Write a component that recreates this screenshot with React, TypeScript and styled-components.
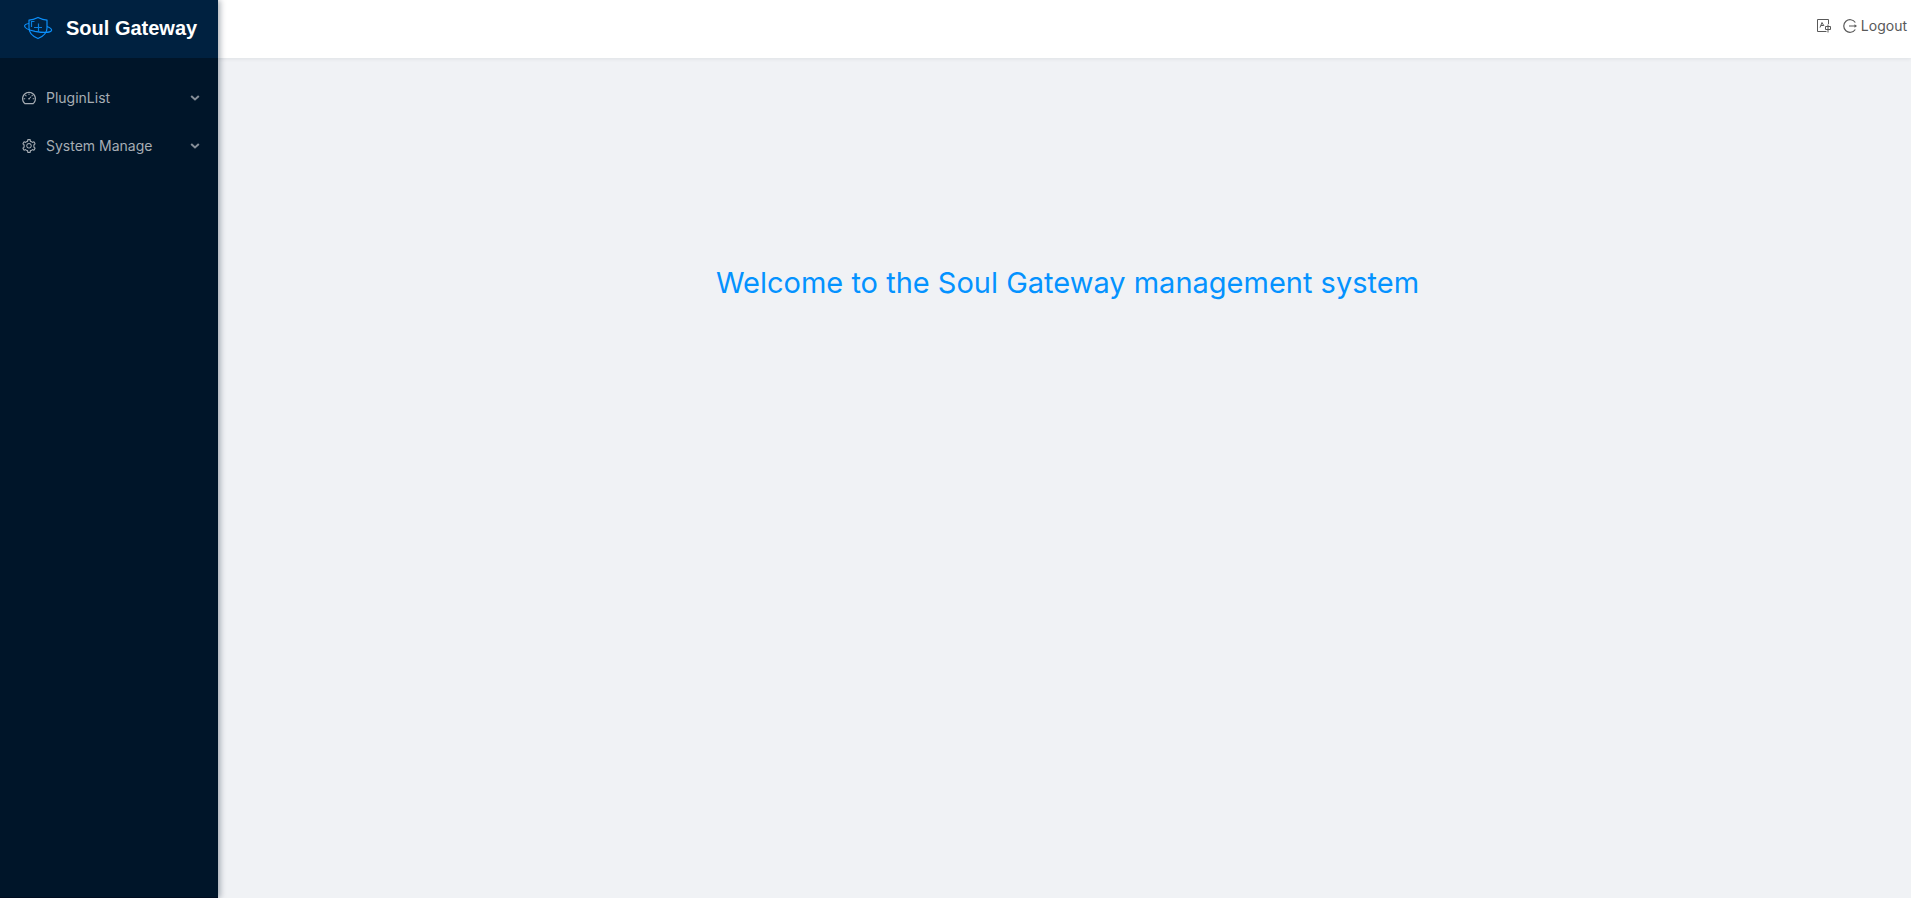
import React from "react";
import styled, { createGlobalStyle } from "styled-components";
import { AiOutlineDashboard, AiOutlineSetting } from "react-icons/ai";

const GlobalStyle = createGlobalStyle`
  *, *::before, *::after { box-sizing: border-box; }
  body {
    margin: 0;
    font-family: Inter, "Liberation Sans", sans-serif;
    font-size: 14px;
    line-height: 20px;
    background: #f0f2f5;
  }
`;

const Layout = styled.div`
  display: flex;
  min-height: 100vh;
`;

const Sider = styled.aside`
  flex: 0 0 218px;
  position: relative;
  z-index: 1;
  background: #001529;
  border-bottom: 1px solid #000d20;
  box-shadow: 2px 0 6px rgba(0, 21, 41, 0.35);
`;

const Brand = styled.a`
  display: flex;
  align-items: center;
  gap: 12px;
  height: 58px;
  padding: 0 0 2px 24px;
  background: #002140;
  text-decoration: none;
`;

const BrandTitle = styled.h1`
  margin: 0;
  color: #fff;
  font-family: "Liberation Sans", sans-serif;
  font-size: 20px;
  font-weight: 700;
  line-height: 24px;
`;

const Menu = styled.nav`
  display: flex;
  flex-direction: column;
  gap: 8px;
  padding-top: 20px;
`;

const MenuItem = styled.button`
  display: flex;
  align-items: center;
  gap: 9px;
  height: 40px;
  padding: 0 18px 0 21px;
  border: 0;
  background: transparent;
  color: #a6adb4;
  font: inherit;
  text-align: left;
  cursor: pointer;
`;

const MenuLabel = styled.span`
  flex: 1;
`;

const Main = styled.div`
  flex: 1;
  min-width: 0;
  display: flex;
  flex-direction: column;
`;

const Header = styled.header`
  display: flex;
  justify-content: flex-end;
  align-items: center;
  gap: 12px;
  height: 58px;
  padding: 0 4px 6px 12px;
  background: #fff;
  box-shadow: 0 1px 4px rgba(0, 21, 41, 0.08);
`;

const HeaderButton = styled.button`
  display: flex;
  align-items: center;
  gap: 4px;
  padding: 0;
  border: 0;
  background: transparent;
  color: #595959;
  font: inherit;
  cursor: pointer;
`;

const Content = styled.main`
  flex: 1;
  padding: 201px 24px 24px 30px;
`;

const Welcome = styled.p`
  margin: 0;
  color: #0492ff;
  font-size: 29px;
  line-height: 48px;
  text-align: center;
`;

const Logo = () => (
  <svg width="30" height="24" viewBox="0 0 30 24" fill="none" stroke="#0b8ffa" strokeWidth="1.200" aria-hidden="true">
    <path d="M14 1.500C11 3 8 4 5 4.200V12c0 5 4 8.500 9 10.500 5-2 9-5.500 9-10.500V4.200C20 4 17 3 14 1.500Z" />
    <path d="M5 7.500C1.500 8 .5 9 .6 10.200.8 12 5 14 11 15.300c7 1.300 15.500 1.700 16.500-.8.5-1.500-1.500-2.800-4.500-4" />
    <path d="M7.500 11V5.500h3M10 11.500h8M14.500 7.500v8" strokeOpacity=".85" />
  </svg>
);

const Chevron = () => (
  <svg width="10" height="8" viewBox="0 0 10 8" fill="none" stroke="currentColor" strokeOpacity=".8" strokeWidth="2" aria-hidden="true">
    <path d="M1.200 2 5 5.500l3.800-3.500" />
  </svg>
);

const LanguageIcon = () => (
  <svg width="14" height="14" viewBox="0 0 14 14" fill="none" stroke="currentColor" aria-hidden="true">
    <path d="M11.500 5V.5H.5v12h9" />
    <path d="M3 8.500 5 3.500l2 3.500M4 6.500h2.500M8.500 7.500h5v3h-5zM11 5.500v8" />
  </svg>
);

const LogoutIcon = () => (
  <svg width="14" height="14" viewBox="0 0 14 14" fill="none" stroke="currentColor" strokeWidth="1.200" aria-hidden="true">
    <path d="M12.300 3.500a6.300 6.300 0 1 0 0 7M6 7h6.500" />
    <path d="M11.500 5.300 14 7l-2.500 1.700Z" fill="currentColor" stroke="none" />
  </svg>
);

const menuItems = [
  { label: "PluginList", Icon: AiOutlineDashboard },
  { label: "System Manage", Icon: AiOutlineSetting },
];

export default function App() {
  return (
    <Layout>
      <GlobalStyle />
      <Sider>
        <Brand href="#/home">
          <Logo />
          <BrandTitle>Soul Gateway</BrandTitle>
        </Brand>
        <Menu aria-label="Main">
          {menuItems.map(({ label, Icon }) => (
            <MenuItem key={label} type="button" aria-expanded={false}>
              <Icon size={16} aria-hidden="true" />
              <MenuLabel>{label}</MenuLabel>
              <Chevron />
            </MenuItem>
          ))}
        </Menu>
      </Sider>
      <Main>
        <Header>
          <HeaderButton type="button" aria-label="Change language">
            <LanguageIcon />
          </HeaderButton>
          <HeaderButton type="button">
            <LogoutIcon />
            Logout
          </HeaderButton>
        </Header>
        <Content>
          <Welcome>Welcome to the Soul Gateway management system</Welcome>
        </Content>
      </Main>
    </Layout>
  );
}
